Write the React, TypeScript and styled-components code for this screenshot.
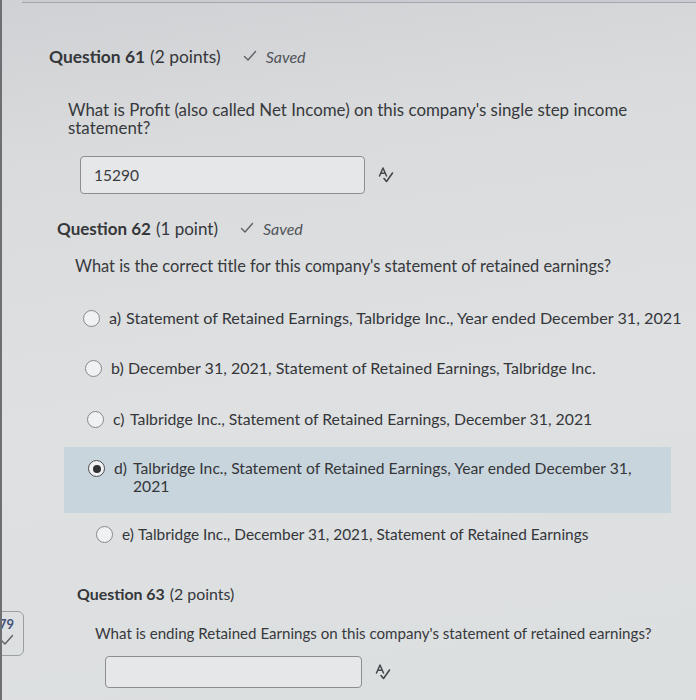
import React from 'react';
import styled, { createGlobalStyle } from 'styled-components';

const GlobalStyle = createGlobalStyle`
  html, body {
    margin: 0;
    padding: 0;
  }
  body {
    font-family: Lato, "Open Sans", "Liberation Sans", sans-serif;
    color: #3b3d40;
  }
`;

const Page = styled.div`
  position: relative;
  width: 696px;
  height: 700px;
  overflow: hidden;
  box-sizing: border-box;
  border-left: 2px solid #6d6f72;
  background: linear-gradient(172deg, #cfd1d4 0%, #d9dbdd 22%, #dee0e1 55%, #dcdfe0 100%);
`;

const TopRule = styled.div`
  height: 2px;
  margin-left: 20px;
  border-bottom: 1px solid #a2a6aa;
  background: #c9ccd0;
`;

const Question = styled.section<{ $indent: number; $top: number }>`
  display: flex;
  flex-direction: column;
  padding-left: ${(p) => p.$indent}px;
  margin-top: ${(p) => p.$top}px;
`;

const Heading = styled.div<{ $size: number }>`
  display: flex;
  align-items: center;
  height: 20px;
  font-size: ${(p) => p.$size}px;
  color: #35373a;
  white-space: nowrap;
`;

const Num = styled.span`
  font-weight: 700;
  margin-right: 5px;
`;

const Saved = styled.span`
  display: inline-flex;
  align-items: center;
  gap: 9px;
  margin-left: 22px;
  font-size: 16px;
  font-style: italic;
  color: #505357;
`;

const Prompt = styled.p<{ $shift: number; $top: number; $size: number }>`
  margin: ${(p) => p.$top}px 0 0 ${(p) => p.$shift}px;
  font-size: ${(p) => p.$size}px;
  line-height: 18px;
  color: #37393c;
  max-width: 580px;
`;

const AnswerRow = styled.div<{ $shift: number; $top: number }>`
  display: flex;
  align-items: center;
  gap: 12px;
  margin: ${(p) => p.$top}px 0 0 ${(p) => p.$shift}px;
`;

const Field = styled.div<{ $w: number; $h: number }>`
  box-sizing: border-box;
  width: ${(p) => p.$w}px;
  height: ${(p) => p.$h}px;
  display: flex;
  align-items: center;
  padding-left: 13px;
  border: 1.5px solid #8b8f93;
  border-radius: 4px;
  background: #e5e7e8;
  font-size: 15.5px;
  color: #3a3c3f;
`;

const Options = styled.div`
  display: flex;
  flex-direction: column;
  padding-top: 18px;
`;

const Option = styled.div<{ $indent: number; $selected?: boolean; $pad: string; $size: number }>`
  display: flex;
  align-items: flex-start;
  padding: ${(p) => p.$pad};
  padding-left: ${(p) => p.$indent}px;
  margin: ${(p) => (p.$selected ? '3px 25px 0 7px' : '0')};
  background: ${(p) => (p.$selected ? '#c9d5dc' : 'transparent')};
  font-size: ${(p) => p.$size}px;
  line-height: 18px;
  color: #34363a;
`;

const Radio = styled.span<{ $checked?: boolean }>`
  box-sizing: border-box;
  flex: none;
  width: 17px;
  height: 17px;
  margin-top: 1px;
  margin-right: 9px;
  border-radius: 50%;
  border: 1.5px solid ${(p) => (p.$checked ? '#4a4d51' : '#85898d')};
  background: #eff1f2;
  display: flex;
  align-items: center;
  justify-content: center;

  &::after {
    content: '';
    display: ${(p) => (p.$checked ? 'block' : 'none')};
    width: 8px;
    height: 8px;
    border-radius: 50%;
    background: #2f3134;
  }
`;

const Letter = styled.span<{ $w: number }>`
  flex: none;
  width: ${(p) => p.$w}px;
`;

const OptionText = styled.span<{ $max?: number }>`
  max-width: ${(p) => (p.$max ? `${p.$max}px` : 'none')};
`;

const SideBadge = styled.div`
  position: absolute;
  left: -20px;
  top: 611px;
  width: 42px;
  height: 45px;
  box-sizing: border-box;
  border: 1px solid #9a9ea2;
  border-radius: 6px;
  display: flex;
  flex-direction: column;
  align-items: flex-end;
  gap: 2px;
  padding: 4px 9px 0 0;
  font-size: 13px;
  font-weight: 700;
  color: #44527a;
`;

const Tick = () => (
  <svg width="14" height="12" viewBox="0 0 14 12" fill="none">
    <path d="M1.5 6.5 L5 10 L12.5 1.5" stroke="#5f6266" strokeWidth="1.4" strokeLinecap="round" strokeLinejoin="round" />
  </svg>
);

const SpellIcon = () => (
  <svg width="18" height="18" viewBox="0 0 18 18" fill="none">
    <path d="M2.5 10 L6 2 L9.5 10 M3.8 7.2 H8.2" stroke="#45484c" strokeWidth="1.5" strokeLinecap="round" strokeLinejoin="round" />
    <path d="M7 12.5 L9.5 15.5 L15.5 7" stroke="#45484c" strokeWidth="1.6" strokeLinecap="round" strokeLinejoin="round" />
  </svg>
);

// indent is measured from the question's own left edge
const choices = [
  { key: 'a', text: 'Statement of Retained Earnings, Talbridge Inc., Year ended December 31, 2021', indent: 26, pad: '16px 0', size: 16.2, letter: 17 },
  { key: 'b', text: 'December 31, 2021, Statement of Retained Earnings, Talbridge Inc.', indent: 28, pad: '16px 0 17px', size: 16.0, letter: 17 },
  { key: 'c', text: 'Talbridge Inc., Statement of Retained Earnings, December 31, 2021', indent: 30, pad: '16px 0', size: 15.8, letter: 17 },
  { key: 'd', text: 'Talbridge Inc., Statement of Retained Earnings, Year ended December 31, 2021', indent: 24, pad: '12px 0 18px', size: 15.7, letter: 19, selected: true, max: 515 },
  { key: 'e', text: 'Talbridge Inc., December 31, 2021, Statement of Retained Earnings', indent: 39, pad: '12px 0', size: 15.4, letter: 16 },
];

const App = () => (
  <Page>
    <GlobalStyle />
    <TopRule />

    <Question $indent={47} $top={43}>
      <Heading $size={17.4}>
        <Num>Question 61</Num>
        (2 points)
        <Saved><Tick />Saved</Saved>
      </Heading>
      <Prompt $shift={19} $top={35} $size={16.9}>
        What is Profit (also called Net Income) on this company&apos;s single step income statement?
      </Prompt>
      <AnswerRow $shift={31} $top={19}>
        <Field $w={285} $h={38}>15290</Field>
        <SpellIcon />
      </AnswerRow>
    </Question>

    <Question $indent={55} $top={24}>
      <Heading $size={17}>
        <Num>Question 62</Num>
        (1 point)
        <Saved><Tick />Saved</Saved>
      </Heading>
      <Prompt $shift={18} $top={19} $size={16.4}>
        What is the correct title for this company&apos;s statement of retained earnings?
      </Prompt>
      <Options>
        {choices.map((c) => (
          <Option
            key={c.key}
            $indent={c.indent}
            $pad={c.pad}
            $size={c.size}
            $selected={c.selected}
          >
            <Radio $checked={c.selected} />
            <Letter $w={c.letter}>{c.key})</Letter>
            <OptionText $max={c.max}>{c.text}</OptionText>
          </Option>
        ))}
      </Options>
    </Question>

    <Question $indent={75} $top={28}>
      <Heading $size={15.9}>
        <Num>Question 63</Num>
        (2 points)
      </Heading>
      <Prompt $shift={18} $top={21} $size={15.1}>
        What is ending Retained Earnings on this company&apos;s statement of retained earnings?
      </Prompt>
      <AnswerRow $shift={28} $top={14}>
        <Field $w={257} $h={32} />
        <SpellIcon />
      </AnswerRow>
    </Question>

    <SideBadge>
      79
      <Tick />
    </SideBadge>
  </Page>
);

export default App;
